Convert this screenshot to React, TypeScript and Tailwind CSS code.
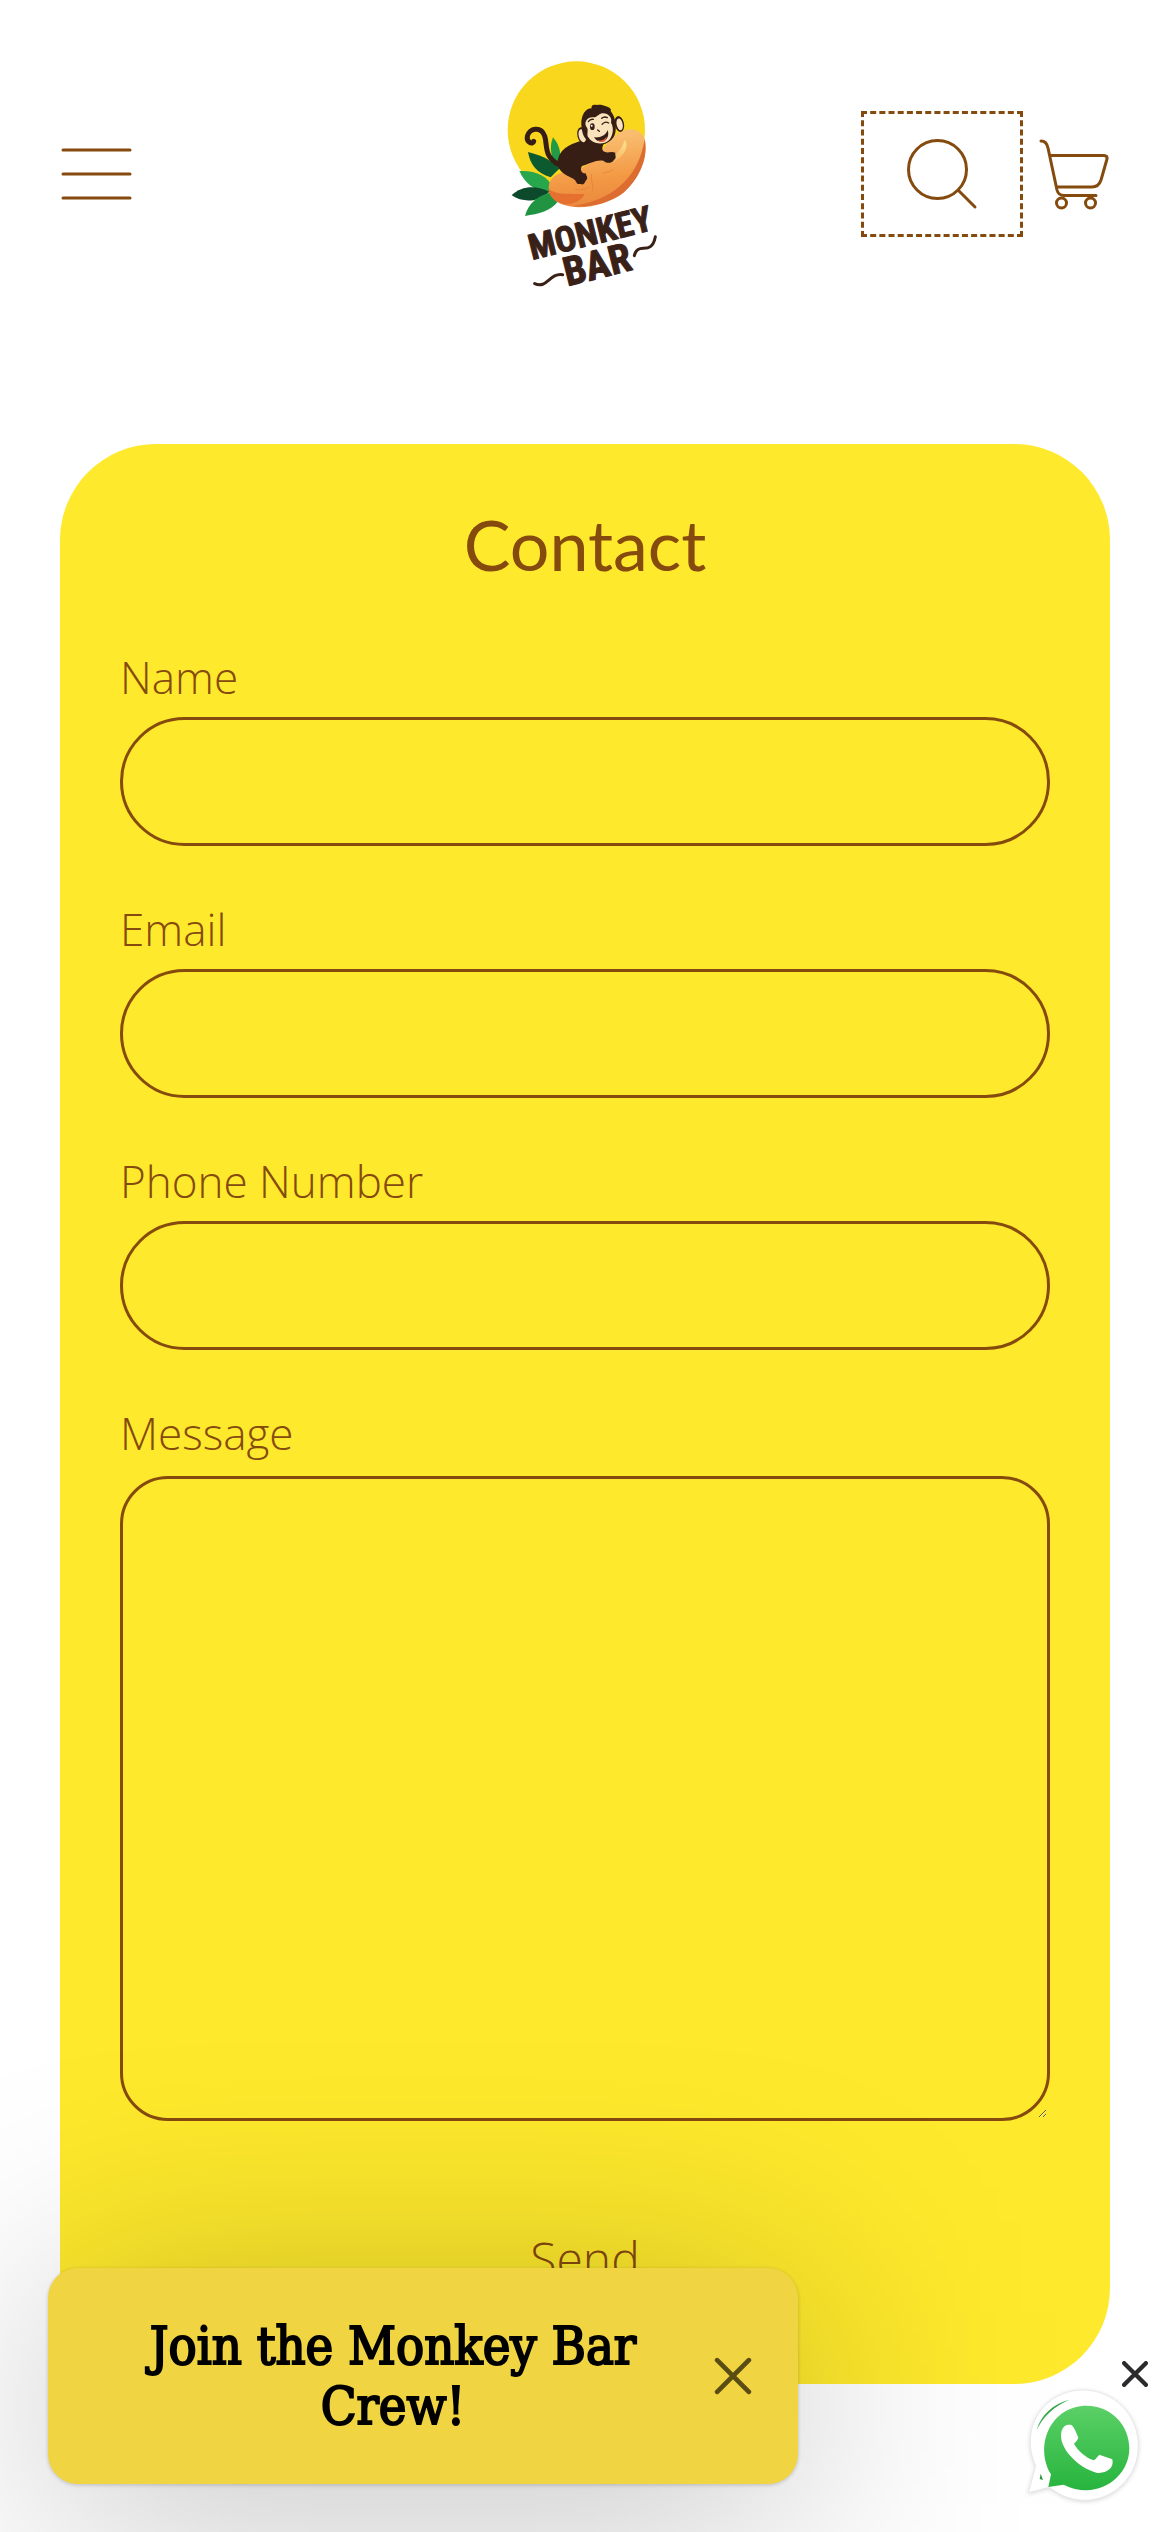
import React, { useState } from "react";

interface FieldProps {
  id: string;
  label: string;
  type?: string;
}

const MenuIcon = () => (
  <svg width="72" height="72" viewBox="0 0 72 72" fill="none" stroke="currentColor" strokeWidth="3" strokeLinecap="round">
    <path d="M3 12H70M3 36H70M3 60H70" />
  </svg>
);

const SearchIcon = () => (
  <svg width="72" height="72" viewBox="0 0 72 72" fill="none" stroke="currentColor" strokeWidth="3" strokeLinecap="round">
    <circle cx="31.5" cy="31.5" r="29" />
    <path d="M52.5 52.5L69 69" />
  </svg>
);

const CartIcon = () => (
  <svg width="72" height="72" viewBox="0 0 72 72" fill="none" stroke="currentColor" strokeWidth="3" strokeLinecap="round" strokeLinejoin="round">
    <path d="M3 3C7 3 9 5 10 10L19 52C20 56 22 57.500 26 57.500H58" />
    <path d="M13 17.500H66C68.500 17.500 69.500 19 69 21L63 42C61.500 46.500 59 49 54 49H19" />
    <circle cx="23.500" cy="65" r="5" />
    <circle cx="52.500" cy="65" r="5" />
  </svg>
);

const CloseIcon = ({ size, stroke }: { size: number; stroke: number }) => (
  <svg width={size} height={size} viewBox="0 0 24 24" fill="none" stroke="currentColor" strokeWidth={stroke} strokeLinecap="round">
    <path d="M2 2L22 22M22 2L2 22" />
  </svg>
);

const Logo = () => (
  <svg width="200" height="258" viewBox="15 15 600 774" role="img" aria-label="Monkey Bar">
    <defs>
      <linearGradient id="mango" x1="0.6" y1="0.1" x2="0.75" y2="1">
        <stop offset="0" stopColor="#f9bd70" />
        <stop offset="0.55" stopColor="#f39a45" />
        <stop offset="1" stopColor="#e9853c" />
      </linearGradient>
      <linearGradient id="shine" x1="1" y1="0" x2="0" y2="1">
        <stop offset="0" stopColor="#fbe08e" />
        <stop offset="1" stopColor="#f6ac58" />
      </linearGradient>
    </defs>
    <circle cx="289" cy="270" r="206" fill="#f9d71c" />
    {/* leaves */}
    <path d="M219 292C243 320 246 350 232 378C214 355 206 325 219 292Z" fill="#219a45" />
    <path d="M144 336C195 348 224 370 240 384L212 412C170 400 150 372 144 336Z" fill="#0c5a30" />
    <path d="M118 393C165 390 205 408 216 440L206 456C165 455 135 430 118 393Z" fill="#27a64b" />
    <path d="M95 466C125 436 170 436 208 455C180 486 130 490 95 466Z" fill="#0c4a2b" />
    <path d="M135 528C145 488 175 466 210 458L234 484C215 513 175 522 135 528Z" fill="#219443" />
    {/* fruit */}
    <path d="M206 444C206 412 232 398 262 396C330 392 360 330 400 292C435 256 480 262 493 295C506 350 480 415 430 458C380 496 300 512 250 494C220 482 206 465 206 444Z" fill="url(#mango)" />
    <path d="M206 446C225 466 270 460 314 462C300 490 262 498 238 489C218 480 207 464 206 446Z" fill="#e5702f" />
    <path d="M494 297C506 350 480 415 430 458C390 490 325 503 280 498C390 482 475 420 494 297Z" fill="#dc6c30" />
    <path d="M434 300C450 318 430 352 396 368L380 362C404 350 424 330 434 300Z" fill="url(#shine)" />
    <path d="M335 402C330 425 345 440 336 455M370 400C382 392 390 400 398 388M285 448C302 452 318 448 330 438" fill="none" stroke="#e98538" strokeWidth="3" />
    {/* monkey */}
    <path d="M161 304C158 316 139 306 142 289C147 264 183 258 194 288C203 316 190 350 238 374" fill="none" stroke="#371e14" strokeWidth="15" strokeLinecap="round" />
    <path d="M314 300C280 308 244 322 235 354C224 390 254 404 280 416C292 424 286 434 302 432C314 438 314 424 321 418C324 408 316 406 318 400C306 402 298 390 306 378C330 370 350 358 370 362C382 372 396 370 402 360C412 352 404 346 406 338C394 332 384 340 376 336C362 334 366 316 376 306Z" fill="#371e14" />
    <ellipse cx="308" cy="286" rx="16" ry="25" transform="rotate(-14 308 286)" fill="#371e14" />
    <ellipse cx="418" cy="252" rx="14" ry="24" transform="rotate(-12 418 252)" fill="#371e14" />
    <ellipse cx="307" cy="287" rx="11" ry="20" transform="rotate(-14 307 287)" fill="#f9e3bd" />
    <ellipse cx="419" cy="253" rx="9" ry="18" transform="rotate(-12 419 253)" fill="#f9e3bd" />
    <path d="M304 256C302 222 320 204 335 205C332 196 340 192 351 195C368 192 386 202 390 205C396 212 390 212 394 216C408 234 411 266 404 285C392 314 340 330 320 300C309 290 306 275 304 256Z" fill="#371e14" />
    <path d="M319 260C310 244 325 228 342 232C350 232 352 225 362 221C382 216 398 232 393 248C404 266 398 292 383 304C363 317 334 309 325 292C318 282 328 270 319 260Z" fill="#f9e3bd" />
    <path d="M342 292C362 294 377 286 383 270C394 304 355 316 342 292Z" fill="#371e14" />
    <path d="M352 300C362 304 375 299 379 290C382 307 361 310 352 300Z" fill="#e35a45" />
    <ellipse cx="337" cy="260" rx="7" ry="10" fill="#371e14" />
    <circle cx="335" cy="257" r="3" fill="#fff" />
    <path d="M366 253Q375 242 386 249M353 270L358 274M325 245Q331 236 340 238M365 235Q373 228 382 233" fill="none" stroke="#371e14" strokeWidth="4" strokeLinecap="round" />
    {/* wordmark */}
    <g fill="#3a2118" stroke="#3a2118" strokeWidth="3" strokeLinejoin="round" fontFamily="'Roboto Condensed', 'Open Sans Condensed', 'Liberation Sans Narrow', Roboto, sans-serif" fontWeight="700">
      <text x="156" y="660" fontSize="106" transform="rotate(-14 156 660)">MONKEY</text>
      <text x="262" y="739" fontSize="120" transform="rotate(-14 262 739)">BAR</text>
    </g>
    <path d="M164 731C202 748 207 698 248 704M463 647C473 602 514 652 526 590" fill="none" stroke="#3a2118" strokeWidth="9" strokeLinecap="round" />
  </svg>
);

const WhatsAppIcon = () => (
  <svg width="115" height="115" viewBox="78 171 345 345" className="drop-shadow-sm">
    <defs>
      <linearGradient id="wa" x1="0" y1="0" x2="0" y2="1">
        <stop offset="0" stopColor="#5bd066" />
        <stop offset="1" stopColor="#27b43e" />
      </linearGradient>
    </defs>
    <path d="M88 488L110 408C58 292 138 180 252 180C346 180 418 256 418 346C418 444 340 511 258 511C230 511 200 503 178 490L150 472Z" fill="#fff" stroke="#e8e6ea" strokeWidth="3" />
    <path d="M113 300C126 254 163 221 212 209C166 228 132 260 113 300Z" fill="#37a84c" />
    <path d="M125 431L132 450L122 447Z" fill="#27963c" />
    <path d="M148 471L156 433C104 343 158 227 263 227C337 227 391 286 391 355C391 445 292 514 194 464Z" fill="url(#wa)" />
    <path d="M187 306C190 288 204 281 218 285C228 296 232 309 238 323C236 331 229 336 225 341C238 364 259 382 285 391C291 388 295 379 301 374L340 388C347 418 317 432 292 428C237 413 177 353 187 306Z" fill="#fff" />
  </svg>
);

const Field: React.FC<FieldProps> = ({ id, label, type = "text" }) => (
  <div className="flex flex-col gap-[10px]">
    <label htmlFor={id} className="text-[44px] leading-[60px]">{label}</label>
    <input
      id={id}
      name={id}
      type={type}
      className="h-[129px] w-full rounded-full border-3 border-[#854a0e] bg-transparent px-12 outline-none"
    />
  </div>
);

const App: React.FC = () => {
  const [showTeaser, setShowTeaser] = useState(true);
  const [showChat, setShowChat] = useState(true);

  return (
    <div className="min-h-screen bg-white font-['Open_Sans',sans-serif] font-light text-[#854a0e]">
      <header className="grid grid-cols-[1fr_auto_1fr] items-center px-[60px] py-[45px]">
        <button aria-label="Menu" className="justify-self-start"><MenuIcon /></button>
        <a href="/"><Logo /></a>
        <div className="flex items-center gap-[15px] justify-self-end">
          <button aria-label="Search" className="flex h-[126px] w-[162px] items-center justify-center border-3 border-dashed border-[#854a0e]">
            <SearchIcon />
          </button>
          <a href="/cart" aria-label="Cart"><CartIcon /></a>
        </div>
      </header>

      <main className="px-[60px] pt-24 pb-[148px]">
        <form className="rounded-[96px] bg-[#fee92c] p-[60px]" onSubmit={e => e.preventDefault()}>
          <h2 className="mb-[63px] text-center font-['Lato',sans-serif] text-[70px] leading-[80px] font-normal">Contact</h2>
          <div className="flex flex-col gap-[53px]">
            <Field id="name" label="Name" />
            <Field id="email" label="Email" type="email" />
            <Field id="phone" label="Phone Number" type="tel" />
            <div className="flex flex-col gap-[13px]">
              <label htmlFor="message" className="text-[44px] leading-[60px]">Message</label>
              <textarea
                id="message"
                name="message"
                className="h-[645px] w-full resize-y rounded-[48px] border-3 border-[#854a0e] bg-transparent p-12 outline-none"
              />
            </div>
          </div>
          <button type="submit" className="mt-[72px] block h-[131px] w-full text-[48px]">Send</button>
        </form>
      </main>

      {/* Newsletter teaser */}
      {showTeaser && (
        <div className="fixed bottom-12 left-12 w-[750px] max-w-full">
          <div className="absolute inset-x-0 top-8 -bottom-8 bg-black/25 blur-[120px]" />
          <div className="relative flex items-center rounded-[30px] bg-[#f1d441] py-12 pr-[46px] pl-[84px] text-black shadow-[0_1px_4px_rgba(0,0,0,0.2)]">
            <button className="flex-1 text-center font-['DejaVu_Serif_Condensed','DejaVu_Serif',serif] text-[52px] leading-[60px] font-normal [-webkit-text-stroke:2px_#000]">
              Join the Monkey Bar Crew!
            </button>
            <button aria-label="Close teaser" onClick={() => setShowTeaser(false)} className="ml-[60px] text-[#5a4d14]">
              <CloseIcon size={38} stroke={3} />
            </button>
          </div>
        </div>
      )}

      {/* WhatsApp chat */}
      {showChat && (
        <div className="fixed right-[22px] bottom-[30px] flex flex-col items-end">
          <button aria-label="Close chat" onClick={() => setShowChat(false)} className="text-[#2b2b2e]">
            <CloseIcon size={26} stroke={4} />
          </button>
          <a href="https://wa.me/" aria-label="WhatsApp" className="mr-2"><WhatsAppIcon /></a>
        </div>
      )}
    </div>
  );
};

export default App;
